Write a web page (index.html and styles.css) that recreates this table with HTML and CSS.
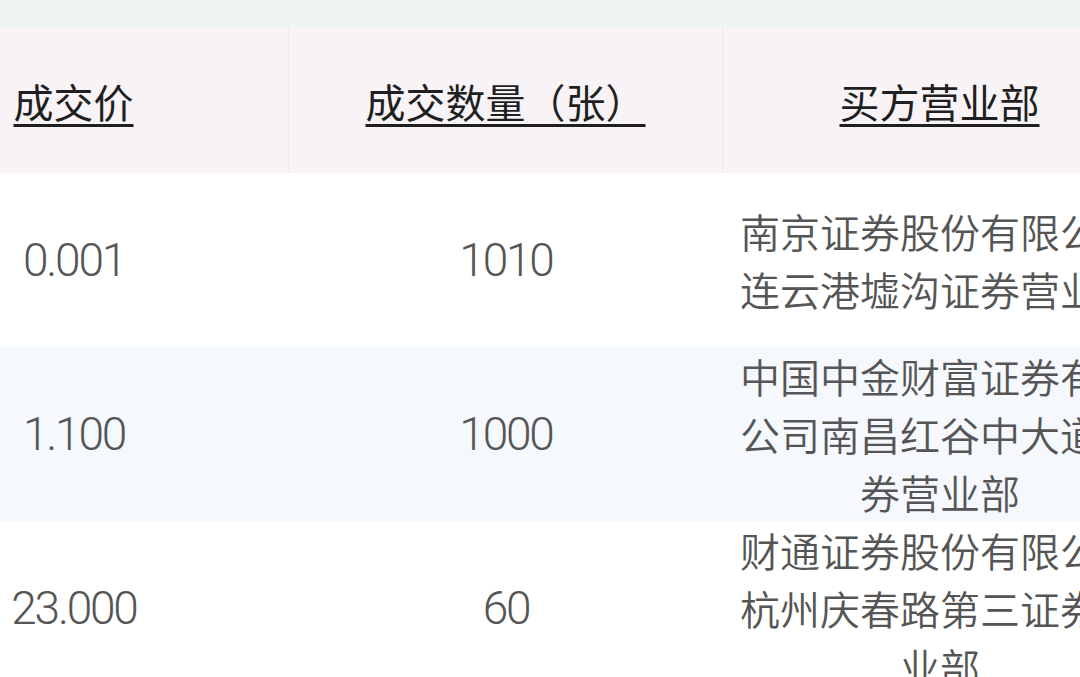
FILE: index.html
```html
<!DOCTYPE html>
<html lang="zh-CN">
<head>
<meta charset="utf-8">
<title>成交明细</title>
<link rel="stylesheet" href="styles.css">
</head>
<body>
<div class="page">
  <div class="topbar"></div>
  <div class="table">
    <div class="row head">
      <div class="cell"><span class="th">成交价</span></div>
      <div class="cell"><span class="th">成交数量（张）</span></div>
      <div class="cell"><span class="th">买方营业部</span></div>
    </div>
    <div class="row">
      <div class="cell num">0.001</div>
      <div class="cell num">1010</div>
      <div class="cell txt">南京证券股份有限公司连云港墟沟证券营业部</div>
    </div>
    <div class="row alt">
      <div class="cell num">1.100</div>
      <div class="cell num">1000</div>
      <div class="cell txt">中国中金财富证券有限公司南昌红谷中大道证券营业部</div>
    </div>
    <div class="row">
      <div class="cell num">23.000</div>
      <div class="cell num">60</div>
      <div class="cell txt">财通证券股份有限公司杭州庆春路第三证券营业部</div>
    </div>
  </div>
</div>
</body>
</html>
```

FILE: styles.css
```css
html, body {
  margin: 0;
  padding: 0;
  background: #ffffff;
  overflow: hidden;
}

body {
  font-family: "Noto Sans CJK SC", "Noto Sans", sans-serif;
}

.page {
  width: 1080px;
  height: 677px;
  overflow: hidden;
}

.topbar {
  height: 27px;
  background: #eef3f3;
}

.table {
  margin-left: -141px;
  width: 1298px;
}

.row {
  display: grid;
  grid-template-columns: 430px 434px 434px;
  min-height: 174px;
  background: #ffffff;
}

.row.alt {
  background: #f5f8fd;
}

.row.head {
  min-height: 146px;
  background: #f7f3f6;
}

.cell {
  display: flex;
  align-items: center;
  justify-content: center;
  text-align: center;
  padding: 0 16px;
}

.head .cell {
  border-right: 1px solid #eee8ec;
}

.th {
  font-size: 40px;
  line-height: 48px;
  font-weight: 400;
  color: #1f1f1f;
  text-decoration: underline;
  text-decoration-thickness: 3px;
  text-underline-offset: 6px;
  padding-top: 2px;
}

.num {
  font-family: Roboto, "Noto Sans", sans-serif;
  font-size: 46px;
  font-weight: 300;
  letter-spacing: -2.2px;
  color: #555555;
}

.txt {
  font-size: 40px;
  line-height: 58px;
  font-weight: 350;
  color: #555555;
}
```
